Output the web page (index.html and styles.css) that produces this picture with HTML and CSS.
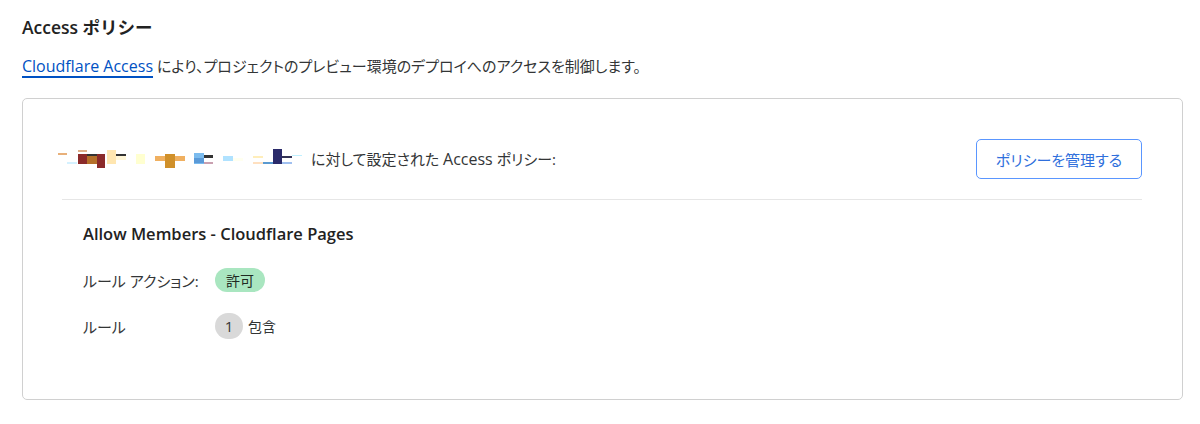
FILE: index.html
```html
<!DOCTYPE html>
<html lang="ja">
<head>
<meta charset="utf-8">
<link rel="stylesheet" href="styles.css">
</head>
<body>
<main class="page">
  <h2 class="title">Access ポリシー</h2>
  <p class="intro"><a class="link" href="#">Cloudflare Access</a> により、プロジェクトのプレビュー環境のデプロイへのアクセスを制御します。</p>
  <section class="card">
    <div class="card-head">
      <div class="head-text">
        <svg class="blob" width="246" height="22" viewBox="57 152 246 22" aria-hidden="true">
          <rect x="58" y="157" width="9" height="2" fill="#e8b07a"/>
          <rect x="67" y="166" width="10" height="2" fill="#d4f1ff"/>
          <rect x="78" y="154" width="9" height="2" fill="#dfb08a"/>
          <rect x="78" y="158" width="9" height="10" fill="#8b2a2a"/>
          <rect x="87" y="158" width="10" height="10" fill="#b5702a"/>
          <rect x="87" y="158" width="10" height="2" fill="#333"/>
          <rect x="97" y="158" width="8" height="14" fill="#8b2a2a"/>
          <rect x="107" y="154" width="9" height="14" fill="#ffe6b0"/>
          <rect x="116" y="158" width="10" height="2" fill="#333"/>
          <rect x="116" y="160" width="10" height="4" fill="#fff6d8"/>
          <rect x="136" y="158" width="9" height="10" fill="#ffffd0"/>
          <rect x="155" y="160" width="30" height="5" fill="#f0b060"/>
          <rect x="165" y="158" width="10" height="14" fill="#d0902a"/>
          <rect x="194" y="157" width="10" height="11" fill="#7bbbee"/>
          <rect x="194" y="162" width="10" height="5" fill="#5a9ad8"/>
          <rect x="204" y="159" width="9" height="3" fill="#333"/>
          <rect x="204" y="166" width="9" height="2" fill="#c9a0b0"/>
          <rect x="223" y="160" width="10" height="5" fill="#b0e2ff"/>
          <rect x="233" y="162" width="10" height="3" fill="#fffff0"/>
          <rect x="253" y="160" width="10" height="2" fill="#ffeebb"/>
          <rect x="253" y="166" width="10" height="2" fill="#ffe0c0"/>
          <rect x="263" y="166" width="10" height="2" fill="#5a9ad0"/>
          <rect x="273" y="153" width="9" height="15" fill="#2a2a6a"/>
          <rect x="282" y="160" width="10" height="2" fill="#333355"/>
          <rect x="282" y="166" width="10" height="2" fill="#a0c0f0"/>
          <rect x="292" y="159" width="10" height="1" fill="#c0f0ff"/>
        </svg>
        <span>に対して設定された <span class="en">Access</span> ポリシー:</span>
      </div>
      <button class="btn" type="button">ポリシーを管理する</button>
    </div>
    <div class="policy">
      <h3 class="policy-name">Allow Members - Cloudflare Pages</h3>
      <div class="row">
        <span class="label">ルール アクション:</span>
        <span class="pill">許可</span>
      </div>
      <div class="row">
        <span class="label">ルール</span>
        <span class="value"><span class="count">1</span>包含</span>
      </div>
    </div>
  </section>
</main>
</body>
</html>
```

FILE: styles.css
```css
* { box-sizing: border-box; }
html, body { margin: 0; padding: 0; background: #fff; }
body {
  font-family: "Open Sans", "Noto Sans CJK JP", sans-serif;
  color: #333536;
  font-size: 15px;
  font-feature-settings: "palt";
}
.page {
  padding: 14px 17px 0 22px;
}
.title {
  margin: 0;
  font-size: 17.5px;
  font-weight: 600;
  line-height: 26px;
  color: #222;
  font-feature-settings: normal;
}
.intro {
  margin: 12px 0 0;
  line-height: 28px;
}
.en { font-size: 16px; }
.link {
  font-size: 16px;
  color: #0051c3;
  text-decoration: underline;
  text-decoration-thickness: 2px;
  text-underline-offset: 4px;
}
.card {
  margin-top: 18px;
  border: 1px solid #d0d0d0;
  border-radius: 5px;
  height: 302px;
  padding: 40px 40px 0 39px;
}
.card-head {
  display: flex;
  align-items: center;
  justify-content: space-between;
  padding-bottom: 20px;
  border-bottom: 1px solid #e6e6e6;
}
.head-text {
  display: flex;
  align-items: center;
  gap: 8px;
}
.blob { margin-left: -5px; display: block; }
.btn {
  font-family: "Open Sans", "Noto Sans CJK JP", sans-serif;
  font-size: 15px;
  font-feature-settings: "palt";
  color: #2f6fdc;
  background: #fff;
  border: 1px solid #5a96ff;
  border-radius: 5px;
  height: 40px;
  width: 166px;
  padding: 0;
}
.policy {
  padding: 21px 0 0 21px;
}
.policy-name {
  margin: 0;
  font-size: 16.5px;
  font-weight: 600;
  line-height: 26px;
  color: #222;
}
.row {
  display: flex;
  align-items: center;
  margin-top: 20px;
  height: 26px;
}
.label {
  width: 132px;
}
.pill {
  display: inline-flex;
  align-items: center;
  justify-content: center;
  width: 50px;
  height: 24px;
  border-radius: 12px;
  background: #a9e6c0;
  color: #1f2a22;
  font-size: 14px;
}
.value {
  display: inline-flex;
  align-items: center;
  gap: 5px;
  font-size: 14px;
}
.count {
  display: inline-flex;
  align-items: center;
  justify-content: center;
  width: 28px;
  height: 26px;
  border-radius: 13px;
  background: #d9d9d9;
  font-size: 15px;
}
```
